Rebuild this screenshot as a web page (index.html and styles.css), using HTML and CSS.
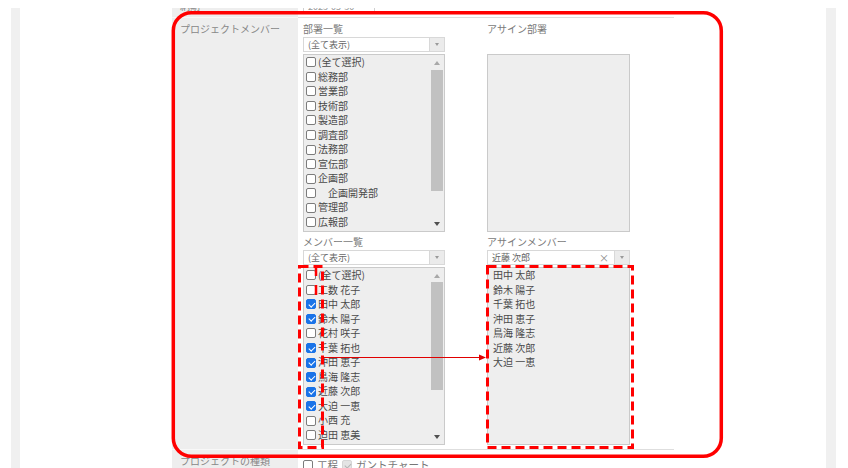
FILE: index.html
```html
<!DOCTYPE html>
<html lang="ja">
<head>
<meta charset="utf-8">
<title>プロジェクトメンバー</title>
<link rel="stylesheet" href="styles.css">
</head>
<body>
<div class="frame">
  <div class="table">
    <div class="th top"><span class="cut">納期</span></div>
    <div class="td top"><div class="date">2023-05-30</div></div>

    <div class="th main">プロジェクトメンバー</div>
    <div class="td main">
      <div class="cols">
        <div class="col">
          <div class="cap">部署一覧</div>
          <div class="select"><span class="sel-text">(全て表示)</span><span class="sel-btn"><i class="tri"></i></span></div>
          <div class="listbox">
            <ul class="items">
              <li><span class="cb"></span>(全て選択)</li>
              <li><span class="cb"></span>総務部</li>
              <li><span class="cb"></span>営業部</li>
              <li><span class="cb"></span>技術部</li>
              <li><span class="cb"></span>製造部</li>
              <li><span class="cb"></span>調査部</li>
              <li><span class="cb"></span>法務部</li>
              <li><span class="cb"></span>宣伝部</li>
              <li><span class="cb"></span>企画部</li>
              <li><span class="cb"></span><span class="indent">企画開発部</span></li>
              <li><span class="cb"></span>管理部</li>
              <li><span class="cb"></span>広報部</li>
            </ul>
            <div class="sb"><span class="arr up"></span><span class="thumb t1"></span><span class="arr dn"></span></div>
          </div>
          <div class="cap second">メンバー一覧</div>
          <div class="select"><span class="sel-text">(全て表示)</span><span class="sel-btn"><i class="tri"></i></span></div>
          <div class="listbox">
            <ul class="items">
              <li><span class="cb"></span>(全て選択)</li>
              <li><span class="cb"></span>工数 花子</li>
              <li><span class="cb on"></span>田中 太郎</li>
              <li><span class="cb on"></span>鈴木 陽子</li>
              <li><span class="cb"></span>花村 咲子</li>
              <li><span class="cb on"></span>千葉 拓也</li>
              <li><span class="cb on"></span>沖田 恵子</li>
              <li><span class="cb on"></span>鳥海 隆志</li>
              <li><span class="cb on"></span>近藤 次郎</li>
              <li><span class="cb on"></span>大迫 一恵</li>
              <li><span class="cb"></span>小西 充</li>
              <li><span class="cb"></span>迫田 恵美</li>
            </ul>
            <div class="sb"><span class="arr up"></span><span class="thumb t2"></span><span class="arr dn"></span></div>
          </div>
        </div>
        <div class="col right">
          <div class="cap">アサイン部署</div>
          <div class="spacer"></div>
          <div class="listbox"></div>
          <div class="cap second">アサインメンバー</div>
          <div class="select"><span class="sel-text">近藤 次郎</span><span class="clear">×</span><span class="sel-btn"><i class="tri"></i></span></div>
          <div class="listbox">
            <ul class="items plain">
              <li>田中 太郎</li>
              <li>鈴木 陽子</li>
              <li>千葉 拓也</li>
              <li>沖田 恵子</li>
              <li>鳥海 隆志</li>
              <li>近藤 次郎</li>
              <li>大迫 一恵</li>
            </ul>
          </div>
        </div>
      </div>
    </div>

    <div class="th">プロジェクトの種類</div>
    <div class="td kinds"><span class="cb"></span><span class="kind">工程</span><span class="cb on dis"></span><span class="kind">ガントチャート</span></div>
  </div>
</div>
<svg class="annot" width="848" height="468" viewBox="0 0 848 468">
  <rect x="173.3" y="12.8" width="548" height="443.5" rx="18" ry="18" fill="none" stroke="#ff0000" stroke-width="3.5"/>
  <rect x="299.5" y="266.5" width="23" height="181" fill="none" stroke="#ff0000" stroke-width="3" stroke-dasharray="9 5"/>
  <line x1="316" y1="266" x2="316" y2="295" stroke="#ff0000" stroke-width="2.5" stroke-dasharray="10 9"/>
  <rect x="487.5" y="266.5" width="145" height="181" fill="none" stroke="#ff0000" stroke-width="3" stroke-dasharray="9 5"/>
  <line x1="323" y1="357.5" x2="481" y2="357.5" stroke="#e00000" stroke-width="1"/>
  <polygon points="479,354.5 486,357.5 479,360.5" fill="#e00000"/>
</svg>
</body>
</html>
```
FILE: styles.css
```css
html, body {
  margin: 0;
  padding: 0;
  background: #ffffff;
}
body {
  width: 848px;
  height: 468px;
  overflow: hidden;
  position: relative;
  font-family: "Noto Sans CJK JP", "Noto Sans", sans-serif;
  font-size: 10px;
  color: #4a4a4a;
}
.frame {
  box-sizing: border-box;
  margin: 8px 0 0 11px;
  width: 825px;
  height: 460px;
  border-left: 9px solid #f0f0f0;
  border-right: 10px solid #f0f0f0;
  overflow: hidden;
}
.table {
  margin-left: 152px;
  display: grid;
  grid-template-columns: 126px 376px;
}
.th {
  background: #eeeeee;
  color: #888888;
  font-size: 10px;
  line-height: 16px;
  padding: 3px 8px 0;
  border-bottom: 1px solid #f8f8f8;
  white-space: nowrap;
}
.td {
  background: #ffffff;
  border-bottom: 1px solid #dedede;
  padding: 3px 0 0 5px;
}
.th.top, .td.top {
  height: 9px;
  padding-top: 0;
  overflow: hidden;
}
.cut {
  display: block;
  margin-top: -10px;
}
.date {
  box-sizing: border-box;
  width: 72px;
  height: 14px;
  margin-top: -8px;
  border: 1px solid #d0d0d0;
  color: #999999;
  font-size: 9px;
  line-height: 12px;
  padding-left: 4px;
}
.td.main {
  padding-bottom: 4px;
}
.cols {
  display: flex;
  gap: 42px;
}
.col {
  width: 142px;
  display: flex;
  flex-direction: column;
}
.col.right {
  width: 143px;
}
.cap {
  height: 16px;
  line-height: 16px;
  color: #7a7a7a;
  font-size: 10px;
  white-space: nowrap;
}
.cap.second {
  margin-top: 2px;
}
.spacer {
  height: 17px;
}
.select {
  box-sizing: border-box;
  height: 15px;
  margin-bottom: 2px;
  border: 1px solid #d8d8d8;
  background: #ffffff;
  display: flex;
  align-items: center;
}
.sel-text {
  flex: 1;
  padding-left: 4px;
  font-size: 9px;
  color: #666666;
  white-space: nowrap;
}
.clear {
  font-size: 10px;
  color: #8a8a8a;
  margin-right: 5px;
  line-height: 13px;
}
.sel-btn {
  align-self: stretch;
  width: 14px;
  background: #ebebeb;
  border-left: 1px solid #d8d8d8;
  display: flex;
  align-items: center;
  justify-content: center;
}
.tri {
  width: 0;
  height: 0;
  border-left: 2.5px solid transparent;
  border-right: 2.5px solid transparent;
  border-top: 3px solid #9a9a9a;
}
.listbox {
  box-sizing: border-box;
  height: 178px;
  border: 1px solid #cacaca;
  background: #eeeeee;
  display: flex;
}
.items {
  list-style: none;
  margin: 0;
  padding: 0;
  flex: 1;
  overflow: hidden;
}
.items li {
  height: 14.55px;
  line-height: 14.55px;
  display: flex;
  align-items: center;
  padding-left: 2px;
  white-space: pre;
  color: #4a4a4a;
}
.items.plain li {
  padding-left: 5px;
}
.indent {
  padding-left: 10px;
}
.cb {
  position: relative;
  flex: none;
  box-sizing: border-box;
  width: 10px;
  height: 10px;
  border: 1px solid #7c7c7c;
  border-radius: 2px;
  background: #ffffff;
  margin-right: 2px;
}
.cb.on {
  background: #1a73e8;
  border-color: #1a73e8;
}
.cb.on::after {
  content: "";
  position: absolute;
  left: 2.5px;
  top: 0.5px;
  width: 2.5px;
  height: 5px;
  border-right: 1.5px solid #ffffff;
  border-bottom: 1.5px solid #ffffff;
  transform: rotate(45deg);
}
.cb.dis {
  background: #e4e4e4;
  border-color: #d6d6d6;
}
.cb.dis::after {
  border-color: #b4b4b4;
}
.sb {
  width: 14px;
  display: flex;
  flex-direction: column;
  align-items: center;
}
.arr {
  height: 15px;
  width: 14px;
  display: flex;
  align-items: center;
  justify-content: center;
}
.arr::before {
  content: "";
  width: 0;
  height: 0;
  border-left: 3.5px solid transparent;
  border-right: 3.5px solid transparent;
}
.arr.up::before {
  border-bottom: 4px solid #a8a8a8;
}
.arr.dn {
  margin-top: auto;
}
.arr.dn::before {
  border-top: 4px solid #505050;
}
.thumb {
  width: 12px;
  background: #c1c1c1;
}
.thumb.t1 {
  height: 121px;
}
.thumb.t2 {
  margin-top: -1px;
  height: 108px;
}
.td.kinds {
  display: flex;
  align-items: center;
  padding-top: 8px;
  border-bottom: none;
}
.kinds .cb {
  margin-right: 4px;
}
.kind {
  color: #777777;
  font-size: 10.5px;
  margin-right: 4px;
  line-height: 14px;
}
.annot {
  position: absolute;
  top: 0;
  left: 0;
  pointer-events: none;
}
```
